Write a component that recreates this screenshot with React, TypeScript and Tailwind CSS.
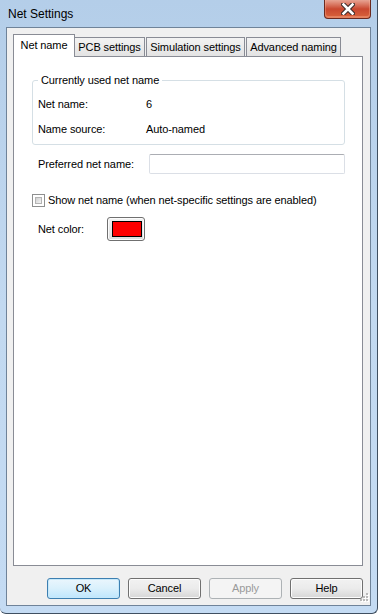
import React from "react";

function WinButton({ label, variant }: { label: string; variant?: "default" | "disabled" }) {
  if (variant === "default") {
    return (
      <div className="w-[73px] h-[21px] rounded-[3px] border border-[#3c7fb1] bg-gradient-to-b from-[#eaf6fd] via-[#d9f0fc] to-[#bee6fd] shadow-[inset_0_0_0_1px_#c6e8fa] flex items-center justify-center text-black">
        {label}
      </div>
    );
  }
  if (variant === "disabled") {
    return (
      <div className="w-[73px] h-[21px] rounded-[3px] border border-[#adb2b5] bg-[#f4f4f4] flex items-center justify-center text-[#9a9a9a]">
        {label}
      </div>
    );
  }
  return (
    <div className="w-[73px] h-[21px] rounded-[3px] border border-[#707070] bg-gradient-to-b from-[#f2f2f2] via-[#ebebeb] to-[#d6d6d6] shadow-[inset_0_0_0_1px_#fcfcfc] flex items-center justify-center text-black">
      {label}
    </div>
  );
}

export default function App() {
  return (
    <div className="w-[378px] h-[614px] flex flex-col bg-gradient-to-b from-[#b4cee9] via-[#c2d9f0] to-[#c4dbf3] border-r border-b border-[#3f4f60] rounded-br-[6px] rounded-bl-[6px] font-['Liberation_Sans',Arial,sans-serif] text-[11px] leading-[13px] tracking-[-0.1px] text-black overflow-hidden">
      {/* Title bar */}
      <div className="h-[27px] shrink-0 flex items-start">
        <div className="pl-[8px] pt-[7px] text-[12px] leading-[14px] tracking-normal text-black">Net Settings</div>
        <div className="ml-auto mr-[6px] w-[47px] h-[19px] rounded-b-[4px] border border-t-0 border-[#6b2a20] bg-gradient-to-b from-[#e7a393] via-[#c9472f] to-[#d9643c] shadow-[inset_0_-1px_0_1px_rgba(255,190,160,0.35)] flex items-center justify-center">
          <svg width="14" height="12" viewBox="0 0 14 12">
            <path d="M2.5 1.5 L11.5 10.5 M11.5 1.5 L2.5 10.5" stroke="#3a2a28" strokeWidth="4.6" strokeLinecap="square" />
            <path d="M2.5 1.5 L11.5 10.5 M11.5 1.5 L2.5 10.5" stroke="#ffffff" strokeWidth="2.6" strokeLinecap="square" />
          </svg>
        </div>
      </div>

      {/* Client area */}
      <div className="relative flex-1 ml-[6px] mr-[6px] mb-[7px] border border-[#6f8399] bg-[#f0f0f0] flex flex-col pt-[6px] pl-[6px] pr-[7px] pb-[6px]">
        {/* Tab strip */}
        <div className="h-[22px] flex items-end shrink-0">
          <div className="relative z-10 -mb-px w-[62px] h-[23px] border border-b-0 border-[#898c95] bg-white flex items-center justify-center pb-[2px]">
            Net name
          </div>
          <div className="-ml-px w-[71px] h-[19px] border border-b-0 border-[#898c95] bg-gradient-to-b from-[#f3f3f3] to-[#e3e3e3] flex items-center justify-center">
            PCB settings
          </div>
          <div className="ml-px w-[99px] h-[19px] border border-b-0 border-[#898c95] bg-gradient-to-b from-[#f3f3f3] to-[#e3e3e3] flex items-center justify-center">
            Simulation settings
          </div>
          <div className="ml-px w-[95px] h-[19px] border border-b-0 border-[#898c95] bg-gradient-to-b from-[#f3f3f3] to-[#e3e3e3] flex items-center justify-center">
            Advanced naming
          </div>
        </div>

        {/* Tab panel */}
        <div className="flex-1 border border-[#898c95] bg-white flex flex-col">
          {/* Group box */}
          <div className="relative mt-[23px] ml-[18px] mr-[17px] rounded-[3px] border border-[#d5dfe5] pt-[17px] pb-[8px] pl-[5px] flex flex-col gap-[12px]">
            <div className="absolute -top-[7px] left-[5px] bg-white px-[3px]">Currently used net name</div>
            <div className="flex h-[13px] items-center">
              <div className="w-[108px]">Net name:</div>
              <div>6</div>
            </div>
            <div className="flex h-[13px] items-center">
              <div className="w-[108px]">Name source:</div>
              <div>Auto-named</div>
            </div>
          </div>

          {/* Preferred net name */}
          <div className="mt-[9px] ml-[24px] flex items-center">
            <div className="w-[111px]">Preferred net name:</div>
            <div className="w-[196px] h-[20px] border border-[#dbdfe6] border-t-[#abadb3] rounded-[2px] bg-white" />
          </div>

          {/* Checkbox */}
          <div className="mt-[20px] ml-[18px] flex items-center gap-[3px]">
            <div className="w-[13px] h-[13px] border border-[#8e8f8f] bg-white p-[2px]">
              <div className="w-full h-full border border-[#b4b4b4] bg-gradient-to-br from-[#d0d0d0] to-[#f5f5f5]" />
            </div>
            <div>Show net name (when net-specific settings are enabled)</div>
          </div>

          {/* Net color */}
          <div className="mt-[10px] ml-[24px] flex items-center">
            <div className="w-[69px]">Net color:</div>
            <div className="w-[38px] h-[24px] rounded-[3px] border border-[#707070] bg-gradient-to-b from-[#f2f2f2] to-[#dcdcdc] shadow-[inset_0_0_0_1px_#fcfcfc] pt-[3px] pl-[4px]">
              <div className="w-[30px] h-[16px] border border-black bg-[#ff0000]" />
            </div>
          </div>
        </div>

        {/* Buttons */}
        <div className="mt-[12px] h-[21px] shrink-0 flex justify-end gap-[8px]">
          <WinButton label="OK" variant="default" />
          <WinButton label="Cancel" />
          <WinButton label="Apply" variant="disabled" />
          <WinButton label="Help" />
        </div>

        {/* Resize grip */}
        <svg className="absolute right-[1px] bottom-[1px]" width="11" height="11" viewBox="0 0 11 11">
          {[
            [8, 0],
            [5, 3],
            [8, 3],
            [2, 6],
            [5, 6],
            [8, 6],
          ].map(([x, y], i) => (
            <g key={i}>
              <rect x={x + 1} y={y + 1} width="2" height="2" fill="#ffffff" />
              <rect x={x} y={y} width="2" height="2" fill="#b8b8b8" />
            </g>
          ))}
        </svg>
      </div>
    </div>
  );
}
